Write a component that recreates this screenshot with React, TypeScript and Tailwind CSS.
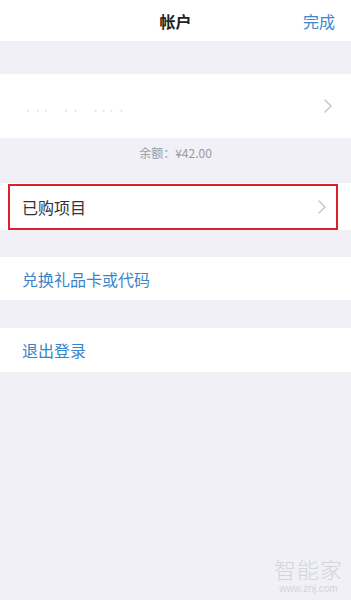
import React from "react";

const font = { fontFamily: '"Noto Sans CJK SC", "Noto Sans", sans-serif' };

function Chevron({ className = "" }: { className?: string }) {
  return (
    <svg width="8" height="14" viewBox="0 0 8 14" className={className}>
      <path d="M1 1 L7 7 L1 13" fill="none" stroke="#c7c7cc" strokeWidth="1.5" strokeLinecap="round" strokeLinejoin="round" />
    </svg>
  );
}

export default function App() {
  return (
    <div className="relative w-[351px] h-[600px] bg-[#f0f0f6] flex flex-col overflow-hidden" style={font}>
      <div className="h-[41px] bg-white relative flex items-center justify-center shrink-0">
        <span className="text-[16px] font-bold text-[#222]">帐户</span>
        <span className="absolute right-[16px] top-[9px] text-[16px] text-[#3d86d0]">完成</span>
      </div>
      <div className="h-[33px] shrink-0" />
      <div className="h-[64px] bg-white flex items-center justify-between pl-[24px] pr-[19px] shrink-0">
        <div className="flex items-end gap-[12px] pt-[10px] text-[#d8d8dc] text-[8px] leading-none">
          <span>·  ··</span>
          <span>·  ·</span>
          <span>···  ·</span>
        </div>
        <Chevron />
      </div>
      <div className="h-[45px] flex justify-center pt-[6px] shrink-0">
        <span className="text-[12px] leading-[18px] text-[#9a9aa0]">余额：¥42.00</span>
      </div>
      <div className="h-[47px] bg-white flex items-center shrink-0">
        <div className="ml-[8px] w-[330px] h-[46px] border-2 border-[#d8222c] flex items-center justify-between pl-[12px] pr-[10px]">
          <span className="text-[16px] text-[#333]">已购项目</span>
          <Chevron />
        </div>
      </div>
      <div className="h-[27px] shrink-0" />
      <div className="h-[43px] bg-white flex items-center pl-[22px] shrink-0">
        <span className="text-[16px] text-[#3a85c9]">兑换礼品卡或代码</span>
      </div>
      <div className="h-[28px] shrink-0" />
      <div className="h-[44px] bg-white flex items-center pl-[22px] shrink-0">
        <span className="text-[16px] text-[#3a85c9]">退出登录</span>
      </div>
      <div className="absolute right-[8px] bottom-[6px] flex flex-col items-center gap-[5px] text-[#d2d5de]">
        <span className="text-[22px] leading-none tracking-[1px] font-light">智能家</span>
        <span className="text-[10px] leading-none" style={{ fontFamily: '"Liberation Sans", sans-serif' }}>www.znj.com</span>
      </div>
    </div>
  );
}
